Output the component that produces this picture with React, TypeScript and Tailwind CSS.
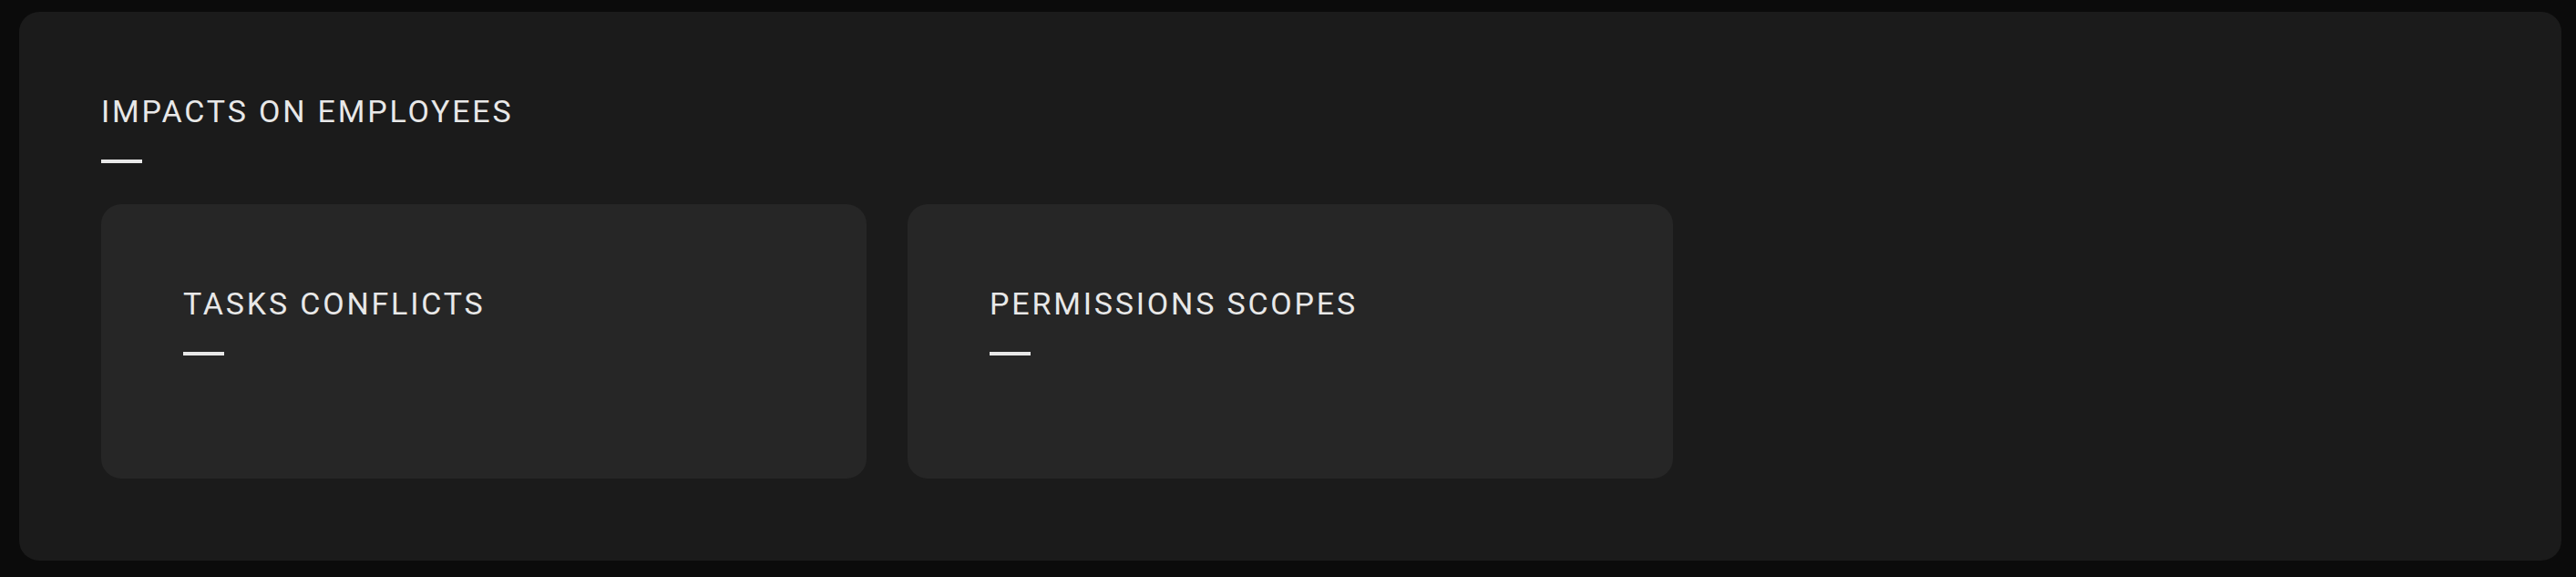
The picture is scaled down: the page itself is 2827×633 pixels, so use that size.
export default function App() {
  const cards = ["Tasks Conflicts", "Permissions Scopes"];

  return (
    <div className="min-h-screen bg-[#0b0b0b] pl-[21px] pr-[16px] pt-[13px] pb-[18px] font-['Roboto',sans-serif] text-[#e8e8e8]">
      <section className="rounded-[22px] bg-[#1b1b1b] p-[90px]">
        <SectionTitle title="Impacts on employees" />

        {/* Cards */}
        <div className="mt-[45px] flex gap-[45px]">
          {cards.map((card) => (
            <div
              key={card}
              className="h-[301px] w-[840px] rounded-[22px] bg-[#262626] p-[90px]"
            >
              <SectionTitle title={card} />
            </div>
          ))}
        </div>
      </section>
    </div>
  );
}

function SectionTitle({ title }: { title: string }) {
  return (
    <div>
      <h2 className="pt-[2px] text-[34px] font-normal uppercase leading-[34px] tracking-[0.083em]">
        {title}
      </h2>
      <div className="mt-[36px] h-[4px] w-[45px] bg-[#e8e8e8]" />
    </div>
  );
}
